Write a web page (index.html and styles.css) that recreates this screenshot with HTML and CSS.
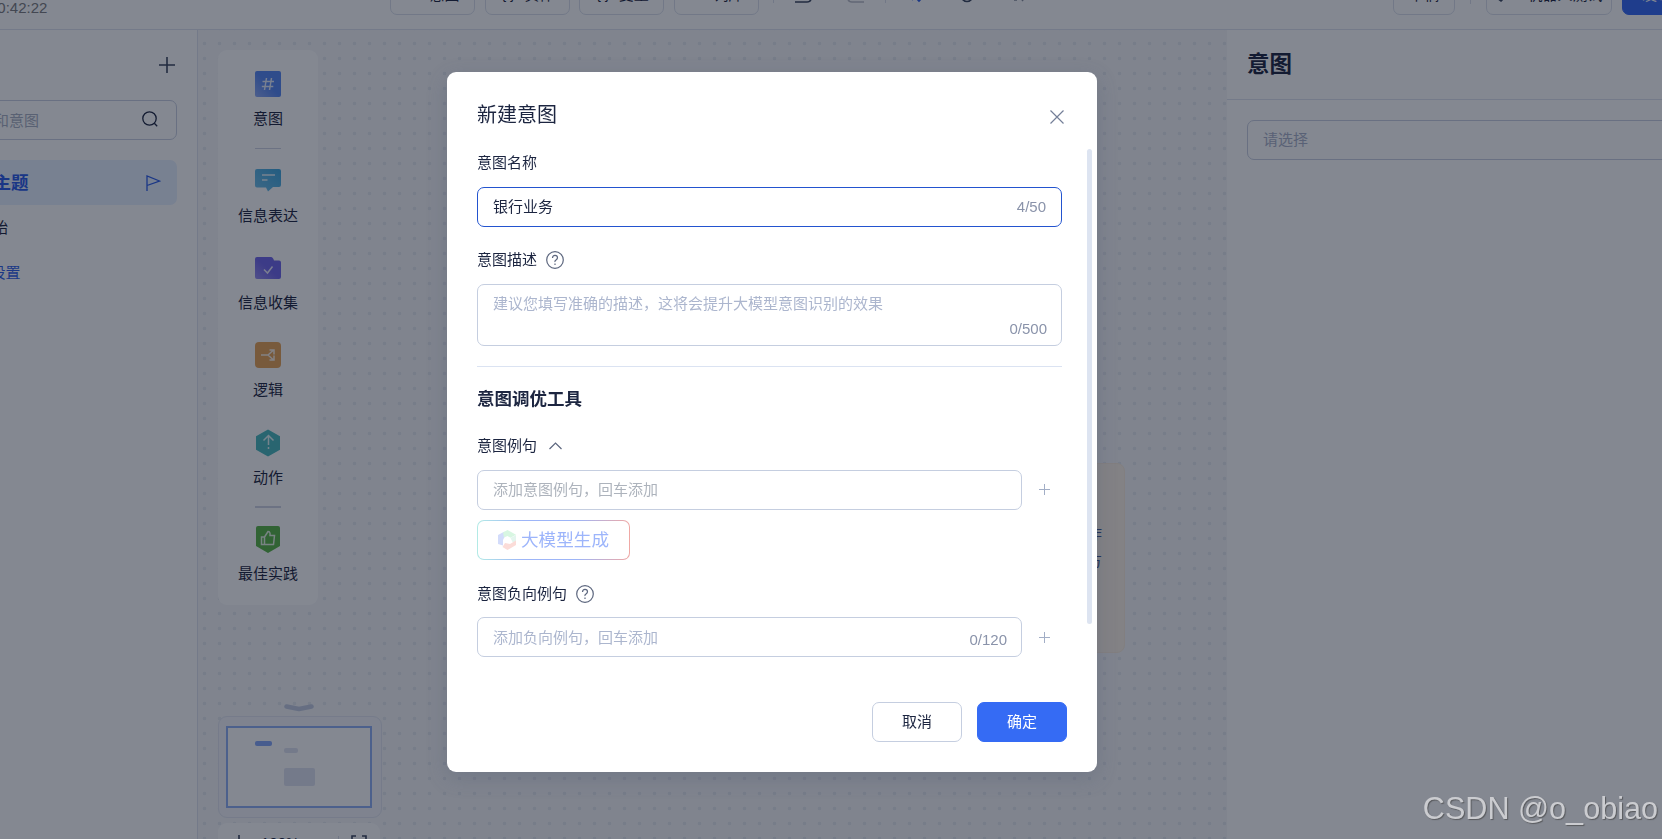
FILE: index.html
```html
<!DOCTYPE html>
<html lang="zh-CN">
<head>
  <meta charset="UTF-8">
  <title>新建意图</title>
  <link rel="stylesheet" href="styles.css">
</head>
<body>

<div class="app">
  <header class="topbar">
    <span class="save-time">10:42:22</span>
    <div class="tools">
      <button class="tool"><span class="sym">//</span>意图</button>
      <button class="tool"><span class="sym">{ }</span>实体</button>
      <button class="tool"><span class="sym">{ }</span>变量</button>
      <button class="tool"><span class="sym"></span>词库</button>
    </div>
    <div class="tool-icons">
      <i class="sep"></i>
      <svg class="undo" width="18" height="18" viewBox="0 0 18 18"><path d="M5 1L1 5l4 4M1 5h12q4 0 4 4v4q0 4-4 4H1"/></svg>
      <svg class="redo" width="18" height="18" viewBox="0 0 18 18"><path d="M13 1l4 4-4 4M17 5H5q-4 0-4 4v4q0 4 4 4h12"/></svg>
      <i class="sep"></i>
      <svg class="link" width="18" height="18" viewBox="0 0 18 18"><path d="M2 12l3 3M7 12l4 4 4-4M12 14l3-3M5 10l4 4"/></svg>
      <svg class="gear" width="18" height="18" viewBox="0 0 18 18"><circle cx="9" cy="11" r="5.5"/></svg>
      <svg class="more" width="18" height="18" viewBox="0 0 18 18"><path d="M4 15h3M11 13l2 3"/></svg>
    </div>
    <div class="actions">
      <button class="tool draft">草稿</button>
      <i class="sep"></i>
      <button class="tool test"><svg width="12" height="18" viewBox="0 0 12 18"><path d="M2 13l4 3 3-3"/></svg>机器人测试</button>
      <button class="tool publish">发布</button>
    </div>
  </header>

  <div class="workspace">
    <aside class="sidebar">
      <div class="side-head">
        <svg width="16" height="16" viewBox="0 0 16 16"><path d="M8 0v16M0 8h16"/></svg>
      </div>
      <div class="search">
        <span>搜索主题和意图</span>
        <svg width="16" height="16" viewBox="0 0 16 16"><circle cx="7.5" cy="7.5" r="6.7"/><path d="M12.3 12.3l2.9 2.9"/></svg>
      </div>
      <div class="topic">
        <b>默认主题</b>
        <svg width="15" height="16" viewBox="0 0 15 16"><path d="M1 16V1l12.5 5L1 10.5"/></svg>
      </div>
      <div class="node-row">开始</div>
      <div class="node-row blue">主题设置</div>
    </aside>

    <main class="canvas">
      <div class="palette">
        <div class="item i1">
          <svg width="26" height="26" viewBox="0 0 26 26"><defs><linearGradient id="gb" x1="0" y1="1" x2="1" y2="0"><stop offset="0" stop-color="#8fabf5"/><stop offset=".5" stop-color="#5586f2"/><stop offset="1" stop-color="#5586f2"/></linearGradient></defs><rect width="26" height="26" rx="2" fill="url(#gb)"/><path d="M11.500 7l-2 12M16.500 7l-2 12M7.500 10.500h11.500M6.800 15.500H18.300" class="w"/></svg>
          <span>意图</span>
        </div>
        <hr>
        <div class="item i2">
          <svg width="26" height="23" viewBox="0 0 26 23"><defs><linearGradient id="gc" x1="0" y1="1" x2="1" y2="0"><stop offset="0" stop-color="#72bfe8"/><stop offset="1" stop-color="#3ba6dd"/></linearGradient></defs><path d="M2 0h22q2 0 2 2v14q0 2-2 2h-6l-5 4.500-2-4H2q-2 0-2-2V2q0-2 2-2z" fill="url(#gc)"/><path d="M7 6h13M7 11h5.500" class="w"/></svg>
          <span>信息表达</span>
        </div>
        <div class="item i3">
          <svg width="26" height="23" viewBox="0 0 26 23"><defs><linearGradient id="gp" x1="0" y1="1" x2="1" y2="0"><stop offset="0" stop-color="#968df0"/><stop offset=".5" stop-color="#6f64ea"/><stop offset="1" stop-color="#6f64ea"/></linearGradient></defs><path d="M2 0h14q2 0 3 3.500h5q2 0 2 2V20q0 2-2 2H2q-2 0-2-2V2q0-2 2-2z" fill="url(#gp)"/><path d="M9 12.500l3.500 3.500 5-6.500" class="w"/></svg>
          <span>信息收集</span>
        </div>
        <div class="item i4">
          <svg width="26" height="26" viewBox="0 0 26 26"><rect width="26" height="26" rx="4" fill="#e7a355"/><path d="M6 13h7l5-4.500M13 13l5 4.500M14.500 8H19v4.500M14.500 18H19v-4.500" class="w"/></svg>
          <span>逻辑</span>
        </div>
        <div class="item i5">
          <svg width="26" height="28" viewBox="0 0 26 28"><path d="M13 .5L25 7.200v13.600L13 27.500 1 20.800V7.200z" fill="#48b9bd"/><path d="M13.500 7v9M13.500 18v2M8.500 11.500l5-5 5 5" class="w"/></svg>
          <span>动作</span>
        </div>
        <hr class="thick">
        <div class="item i6">
          <svg width="26" height="27" viewBox="0 0 26 27"><path d="M3 0h20q2 0 2 2v18l-12 7-12-7V2q0-2 2-2z" fill="#59b444"/><path d="M6.500 11h3v7.500h-3zM9.500 11l3.500-5.500q2.500 0 2 4h4.500l-1 9H9.500" class="w"/></svg>
          <span>最佳实践</span>
        </div>
      </div>

      <div class="flow-card">请选择下一步动作<br>请配置跳转的地方</div>

      <svg class="fold" width="30" height="8" viewBox="0 0 30 8"><path d="M2.500 2.500L15 5l12.500-2.500"/></svg>
      <div class="minimap">
        <div class="viewport"><i class="m1"></i><i class="m2"></i><i class="m3"></i></div>
      </div>
      <div class="zoombar">
        <svg width="16" height="16" viewBox="0 0 16 16"><path d="M8 0v16M0 8h16"/></svg>
        <span>100%</span>
        <i></i>
        <svg width="16" height="16" viewBox="0 0 16 16"><path d="M1 5V1h4M11 1h4v4M1 11v4h4M11 15h4v-4"/></svg>
      </div>
    </main>

    <aside class="props">
      <h2>意图</h2>
      <div class="select">请选择</div>
    </aside>
  </div>
</div>

<div class="mask">
  <div class="dialog">
    <div class="dialog-head">
      <h3>新建意图</h3>
      <svg width="14" height="14" viewBox="0 0 14 14"><path d="M.5 .5l13 13M13.500 .5l-13 13"/></svg>
    </div>

    <div class="dialog-body">
      <div class="label"><span>意图名称</span></div>
      <div class="field focus"><span>银行业务</span><em>4/50</em></div>

      <div class="label second"><span>意图描述</span>
        <svg width="18" height="18" viewBox="0 0 18 18"><circle cx="9" cy="9" r="8.300"/><path d="M6.500 7q0-2.600 2.500-2.600T11.500 6.800Q11.500 8 10 9T9 11M9 12.600v1.300"/></svg>
      </div>
      <div class="field area"><span>建议您填写准确的描述，这将会提升大模型意图识别的效果</span><em>0/500</em></div>

      <h4>意图调优工具</h4>

      <div class="label third"><span>意图例句</span>
        <svg class="arrow" width="13" height="8" viewBox="0 0 13 8"><path d="M.5 7l6-6 6 6"/></svg>
      </div>
      <div class="row">
        <div class="field grey"><span>添加意图例句，回车添加</span></div>
        <svg class="up" width="11" height="11" viewBox="0 0 11 11"><path d="M5.500 0v11M0 5.500h11"/></svg>
      </div>
      <button class="ai">
        <svg width="18" height="20" viewBox="0 0 18 20">
          <path d="M0 5l6.500-3.500V7L5 10v5.500L0 14z" fill="#d3dcfb"/>
          <path d="M5 2.500L9.500 0 18 4.800l-5.500 3L9.500 6 6 7.500z" fill="#d8f6e2"/>
          <path d="M12.500 8L18 5v6l-3 2z" fill="#e3f5ee"/>
          <path d="M4.500 17l2.500-4 5 1 6-3.500V15l-8.500 5z" fill="#fbdcd8"/>
        </svg>大模型生成
      </button>

      <div class="label fourth"><span>意图负向例句</span>
        <svg width="18" height="18" viewBox="0 0 18 18"><circle cx="9" cy="9" r="8.300"/><path d="M6.500 7q0-2.600 2.500-2.600T11.500 6.800Q11.500 8 10 9T9 11M9 12.600v1.300"/></svg>
      </div>
      <div class="row">
        <div class="field low"><span>添加负向例句，回车添加</span><em>0/120</em></div>
        <svg width="11" height="11" viewBox="0 0 11 11"><path d="M5.500 0v11M0 5.500h11"/></svg>
      </div>
      <i class="scrollbar"></i>
    </div>

    <div class="dialog-foot">
      <button class="btn">取消</button>
      <button class="btn primary">确定</button>
    </div>
  </div>
</div>

<div class="watermark">CSDN @o_obiao</div>

</body>
</html>
```
FILE: styles.css
```css
* {
  box-sizing: border-box;
}

html, body {
  height: 100%;
  margin: 0;
  overflow: hidden;
  font-family: "Liberation Sans", "Noto Sans CJK SC", sans-serif;
  font-size: 15px;
  color: #1c2540;
}

button {
  font-family: inherit;
  font-size: 15px;
  color: inherit;
  padding: 0;
  background: #fff;
}

svg {
  display: block;
  flex: none;
  fill: none;
  stroke: #3b465e;
}

.app {
  height: 839px;
  display: flex;
  flex-direction: column;
  background: #fff;
}

/* top bar */
.topbar {
  height: 30px;
  flex: none;
  display: flex;
  align-items: flex-end;
  border-bottom: 1px solid #dfe3ee;
  overflow: hidden;
  position: relative;
}

.save-time {
  width: 390px;
  margin-left: -11px;
  height: 29px;
  line-height: 16px;
  color: #7c7c80;
}

.tools {
  display: flex;
  gap: 9.700px;
  margin: 0 0 14px 11px;
}

.tool {
  width: 85px;
  height: 40px;
  flex: none;
  display: flex;
  align-items: center;
  justify-content: center;
  gap: 8px;
  padding-bottom: 3px;
  border: 1px solid #dadfeb;
  border-radius: 7px;
}

.sym {
  width: 16px;
  font-size: 14px;
}

.tool-icons {
  display: flex;
  align-items: flex-end;
  margin: 0 0 26px 14px;
}

.tool-icons svg, .actions svg {
  stroke-width: 1.6;
}

.sep {
  width: 1px;
  height: 18px;
  flex: none;
  background: #dadfeb;
}

.undo { margin-left: 20px; }
.redo { margin: 0 20px 0 35px; opacity: .35; }
.tool-icons .link { margin: 0 32px 0 22px; stroke: #2f5fe8; }
.more { margin-left: 34px; opacity: .6; }

.actions {
  display: flex;
  align-items: flex-end;
  position: absolute;
  left: 1393px;
  bottom: 14px;
}

.actions .sep { margin: 0 15px 11px; }
.draft { width: 62px; }
.test { width: 126px; gap: 20px; }
.test svg { margin-top: 1px; }
.publish {
  margin-left: 10px;
  width: 70px;
  color: #fff;
  background: #3569f4;
  border-color: #3569f4;
}

.workspace {
  flex: 1;
  display: flex;
  min-height: 0;
}

/* left column */
.sidebar {
  width: 198px;
  flex: none;
  border-right: 1px solid #dfe3ee;
  padding-right: 20px;
  overflow: hidden;
}

.side-head {
  height: 70px;
  display: flex;
  justify-content: flex-end;
  padding: 27px 2px 0 0;
}

.side-head svg {
  stroke-width: 1.6;
}

.search, .topic {
  width: 277px;
  margin-left: -100px;
  display: flex;
  align-items: center;
  border-radius: 7px;
}

.search {
  height: 40px;
  padding-right: 18px;
  border: 1px solid #c8cee0;
  color: #a9b0c2;
}

.search span {
  width: 138px;
  padding-bottom: 2px;
  text-align: right;
  flex: none;
}

.search svg {
  margin: -2px 0 0 auto;
  stroke: #1c2540;
  stroke-width: 1.3;
}

.topic {
  height: 45px;
  margin-top: 20px;
  padding-right: 16px;
  background: #e6f0fe;
  color: #2a5be8;
}

.topic b {
  width: 128.500px;
  padding-bottom: 2px;
  font-size: 17.500px;
  text-align: right;
}

.topic svg {
  margin-left: auto;
  stroke: #2a5be8;
  stroke-width: 1.3;
}

.node-row {
  width: 108px;
  height: 45px;
  margin-left: -100px;
  line-height: 45px;
  text-align: right;
}

.node-row.blue {
  width: 120.500px;
  color: #2f5fe8;
}

/* canvas */
.canvas {
  flex: 1;
  position: relative;
  overflow: hidden;
  background: #f6f7f9 radial-gradient(circle, #e5e8ef 1.500px, transparent 2.100px) -1px 6px / 15px 15px;
}

.palette {
  position: absolute;
  left: 20px;
  top: 20px;
  width: 100px;
  height: 555px;
  padding-top: 21px;
  border-radius: 9px;
  background: #fff;
}

.palette hr {
  width: 26px;
  height: 1px;
  margin: 0 auto;
  border: 0;
  background: #ced2e2;
}

.palette .thick { height: 2px; }

.item {
  display: flex;
  flex-direction: column;
  align-items: center;
  justify-content: space-between;
  line-height: 22px;
}

.item svg { stroke: none; }
.item .w { stroke: #fff; stroke-width: 1.5; stroke-opacity: .85; }

.i1 { height: 59px; margin-bottom: 18px; }
.i2 { height: 58px; margin: 20px 0 30px; }
.i3 { height: 57px; margin-bottom: 28px; }
.i4 { height: 59px; margin-bottom: 28px; }
.i5 { height: 60px; margin-bottom: 17px; }
.i6 { height: 59px; margin-top: 18px; }

.flow-card {
  position: absolute;
  left: 690px;
  top: 433px;
  width: 237px;
  height: 190px;
  padding: 56px 22px 0 0;
  line-height: 27px;
  text-align: right;
  color: #35508c;
  background: #fcf3e6;
  border: 1px solid #faecdc;
  border-radius: 8px;
}

.fold {
  position: absolute;
  left: 86px;
  top: 674px;
  stroke: #c2cbe0;
  stroke-width: 4.500;
  stroke-linecap: round;
  stroke-linejoin: round;
}

.minimap {
  position: absolute;
  left: 20px;
  top: 686px;
  width: 164px;
  height: 102px;
  padding: 10px 9px 9px 8px;
  border: 1px solid #e2e5f0;
  border-radius: 9px;
  background: #f4f5fb;
}

.viewport {
  width: 146px;
  height: 82px;
  margin-left: -1px;
  margin-top: -1px;
  border: 2px solid #8faef5;
  background: #fff;
  position: relative;
}

.viewport i {
  position: absolute;
  border-radius: 2px;
  background: #dfe2f0;
}

.viewport .m1 { left: 27px; top: 13px; width: 17px; height: 5px; background: #84a6f8; }
.viewport .m2 { left: 56px; top: 20px; width: 14px; height: 5px; }
.viewport .m3 { left: 56px; top: 40px; width: 31px; height: 18px; }

.zoombar {
  position: absolute;
  left: 20px;
  top: 793px;
  width: 162px;
  height: 40px;
  padding: 12px 13px 0;
  display: flex;
  border-radius: 9px;
  background: #fff;
  line-height: 17px;
}

.zoombar svg { stroke-width: 1.6; }
.zoombar span { width: 76px; padding-left: 14px; margin-top: -1px; }
.zoombar i { width: 1px; margin: 1px 12px 0 15px; background: #dadfeb; }

/* right column */
.props {
  width: 435px;
  flex: none;
  background: #fff;
}

.props h2 {
  height: 70px;
  margin: 0;
  padding-left: 20px;
  line-height: 70px;
  font-size: 22.500px;
  border-bottom: 1px solid #dfe3ee;
}

.select {
  height: 40px;
  margin: 20px -20px 0 20px;
  padding-left: 15px;
  line-height: 38px;
  color: #a9b1c8;
  border: 1px solid #c8cee0;
  border-radius: 7px;
}

/* dialog */
.mask {
  position: fixed;
  inset: 0;
  padding: 72px 0 0 447px;
  background: rgba(9, 18, 35, .5);
}

.dialog {
  width: 650px;
  height: 700px;
  display: flex;
  flex-direction: column;
  background: #fff;
  border-radius: 9px;
  box-shadow: 0 6px 20px rgba(80, 90, 115, .3);
}

.dialog-head {
  height: 77px;
  padding: 0 33px 0 30px;
  display: flex;
  justify-content: space-between;
}

.dialog-head h3 {
  margin: 28px 0 0;
  font-size: 20px;
  line-height: 30px;
  font-weight: 400;
}

.dialog-head svg {
  margin-top: 38px;
  stroke: #747f98;
  stroke-width: 1.2;
}

.dialog-body {
  position: relative;
  height: 523px;
  padding: 3px 35px 0 30px;
}

.scrollbar {
  position: absolute;
  left: 640px;
  top: 0;
  width: 5px;
  height: 475px;
  border-radius: 3px;
  background: #dde4f1;
}

.label {
  height: 22px;
  margin-bottom: 13px;
  display: flex;
  align-items: center;
  gap: 9px;
}

.label span { padding-bottom: 3px; }

.label svg {
  stroke: #5c667e;
  stroke-width: 1.2;
}

.label .arrow { margin-left: 3px; margin-top: -1px; }
.second { margin: 22px 0 13px; }
.third { margin: 24px 0 13px; }
.fourth { margin: 23px 0 12px; }

.field {
  height: 40px;
  flex: 1;
  display: flex;
  justify-content: space-between;
  padding: 0 15px;
  line-height: 37px;
  border: 1px solid #c5cee0;
  border-radius: 7px;
  color: #acb6ce;
}

.field em {
  font-style: normal;
  color: #8a93aa;
  line-height: 37px;
}

.field.focus {
  border-color: #2354cf;
  color: #1c2540;
}

.field.area {
  height: 62px;
  padding-right: 14px;
}

.field.area em { line-height: 87px; }
.field.low em { line-height: 43px; margin-right: -1px; }
.field.low span { line-height: 39px; }
.field.grey { color: #adb3bc; }

.dialog-body h4 {
  margin: 20px 0 0;
  padding-top: 20px;
  border-top: 1px solid #dbe3f2;
  font-size: 17.500px;
  line-height: 24px;
}

.row {
  display: flex;
  align-items: center;
  padding-right: 12px;
  gap: 17px;
}

.row svg {
  stroke: #a2aec6;
}

.row .up { margin-top: -1px; }

.ai {
  width: 153px;
  height: 40px;
  margin-top: 10px;
  display: flex;
  align-items: center;
  padding-left: 20px;
  gap: 5px;
  font-size: 17.600px;
  line-height: 36px;
  color: #9db5fb;
  border: 1px solid transparent;
  border-radius: 7px;
  background: linear-gradient(#fff, #fff) padding-box,
    linear-gradient(90deg, #b3ebe6, #9db5f8 30%, #9db5f8 65%, #f0a8a4) border-box;
}

.ai svg { stroke: none; }

.dialog-foot {
  display: flex;
  gap: 15px;
  justify-content: flex-end;
  margin-top: 30px;
  padding-right: 30px;
}

.btn {
  width: 90px;
  height: 40px;
  padding-bottom: 4px;
  border: 1px solid #c5cee0;
  border-radius: 7px;
}

.btn.primary {
  color: #fff;
  background: #356bf4;
  border-color: #356bf4;
}

.watermark {
  position: fixed;
  right: 4px;
  bottom: 13px;
  font-size: 30.600px;
  line-height: 36px;
  color: #cbccd0;
  text-shadow: 1px 1px 1px rgba(60, 60, 60, .6);
}
```
